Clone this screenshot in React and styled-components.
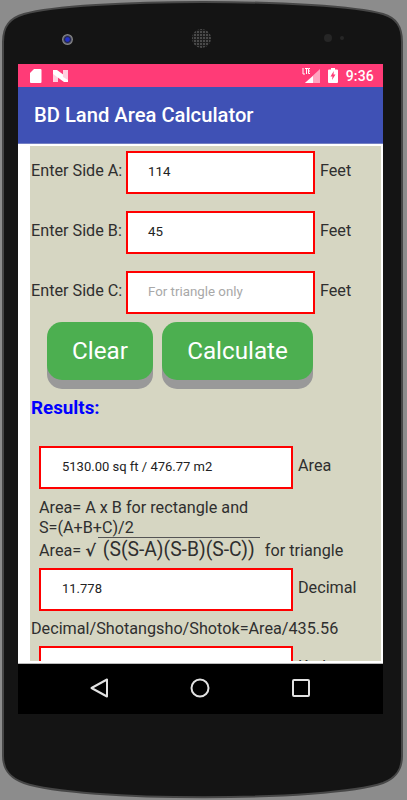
import styled, { createGlobalStyle } from "styled-components";

const Global = createGlobalStyle`
  html, body {
    margin: 0;
    padding: 0;
    background: #8c8c8c;
    overflow: hidden;
  }
  * { box-sizing: border-box; }
`;

const Page = styled.div`
  position: relative;
  width: 407px;
  height: 800px;
  background: #8c8c8c;
`;

const DeviceShape = styled.svg`
  position: absolute;
  left: 0;
  top: 0;
`;

const Phone = styled.div`
  position: relative;
  height: 800px;
  padding: 0 24px 0 18px;
  display: flex;
  flex-direction: column;
`;

const TopBezel = styled.div`
  height: 64px;
  flex-shrink: 0;
`;

const Lens = styled.span`
  position: absolute;
  left: 62px;
  top: 34px;
  width: 11px;
  height: 11px;
  border-radius: 50%;
  background: radial-gradient(circle, #2230c8 0 22%, #20244a 38%, #8a8a8a 62%, #3a3a3a 85%, #1c1c1c 100%);
`;

const Speaker = styled.span`
  position: absolute;
  left: 192px;
  top: 29px;
  width: 19px;
  height: 19px;
  border-radius: 50%;
  background-color: #4a4a4a;
  background-image: radial-gradient(circle, #1d1d1d 0 1px, transparent 1.2px);
  background-size: 3px 3px;
`;

const Sensor = styled.span`
  position: absolute;
  top: ${(p) => 38 - p.$size / 2}px;
  left: ${(p) => p.$left}px;
  width: ${(p) => p.$size}px;
  height: ${(p) => p.$size}px;
  border-radius: 50%;
  background: #262626;
`;

const Screen = styled.div`
  width: 365px;
  height: 650px;
  flex-shrink: 0;
  display: flex;
  flex-direction: column;
  background: #fff;
  font-family: Roboto, "Liberation Sans", sans-serif;
`;

const StatusBar = styled.div`
  height: 23px;
  flex-shrink: 0;
  display: flex;
  align-items: center;
  padding: 0 9px 0 12px;
  background: #ff3b77;
  color: #fff;
`;

const StatusLeft = styled.div`
  display: flex;
  align-items: center;
  gap: 11px;
  flex: 1;
`;

const StatusRight = styled.div`
  display: flex;
  align-items: center;
  gap: 8px;
`;

const Clock = styled.span`
  font-size: 14px;
  font-weight: 500;
  letter-spacing: 0.2px;
`;

const AppBar = styled.div`
  height: 57px;
  flex-shrink: 0;
  display: flex;
  align-items: center;
  padding: 0 16px;
  background: #3f51b5;
  color: #fff;
  font-size: 20.2px;
  font-weight: 500;
  border-bottom: 1px solid #7480c4;
`;

const Body = styled.div`
  flex: 1;
  min-height: 0;
  overflow: hidden;
  padding: 2px 2px 2px 12px;
`;

const Panel = styled.div`
  height: 100%;
  overflow: hidden;
  background: #d6d6c2;
  padding: 5px 0 0 1px;
  color: #2f2f2f;
  font-size: 16.2px;
`;

const SideRow = styled.div`
  height: 43px;
  margin-bottom: 17px;
  display: flex;
  align-items: flex-start;
`;

const SideLabel = styled.span`
  width: 95px;
  margin-top: 10px;
  white-space: nowrap;
`;

const Box = styled.div`
  width: ${(p) => p.$width}px;
  height: 43px;
  flex-shrink: 0;
  display: flex;
  align-items: center;
  padding: 0 0 2px ${(p) => p.$pad}px;
  background: #fff;
  border: 2px solid #ff0000;
  color: ${(p) => (p.$hint ? "#a8a8a8" : "#222")};
  font-size: ${(p) => (p.$small ? 13 : 13.3)}px;
`;

const Unit = styled.span`
  margin: ${(p) => p.$drop || 10}px 0 0 5px;
`;

const Buttons = styled.div`
  display: flex;
  gap: 9px;
  margin: -9px 0 0 16px;
`;

const Button = styled.div`
  width: ${(p) => p.$width}px;
  height: 58px;
  display: flex;
  align-items: center;
  justify-content: center;
  border-radius: 15px;
  background: #4caf50;
  box-shadow: 0 9px 0 #999;
  color: #fff;
  font-size: 24.2px;
`;

const ResultsTitle = styled.div`
  margin-top: 18px;
  color: #0000ff;
  font-size: 18.8px;
  font-weight: 700;
  line-height: 21px;
`;

const ResultRow = styled.div`
  display: flex;
  margin: ${(p) => p.$top || 0}px 0 0 8px;
`;

const Note = styled.div`
  margin: 9px 0 0 8px;
  line-height: 20px;
`;

const Root = styled.span`
  display: inline-block;
  border-top: 1px solid #555;
  margin: 0 1px 0 2px;
  padding: 0 5px;
  font-size: 19.3px;
  line-height: 23px;
`;

const RootSign = styled.span`
  font-family: "DejaVu Sans", sans-serif;
  font-size: 16px;
  font-weight: 700;
`;

const Formula = styled.div`
  height: 24px;
  margin-top: -1px;
  white-space: nowrap;
`;

const Line = styled.div`
  margin: 8px 0;
  line-height: 19px;
  white-space: nowrap;
`;

const NavBar = styled.div`
  height: 51px;
  flex-shrink: 0;
  display: grid;
  grid-template-columns: 71px 20px 81px 20px 82px 18px;
  align-items: center;
  background: #000;
  padding-bottom: 2px;
  border-top: 1px solid #bbb;

  svg:nth-child(1) { grid-column: 2; }
  svg:nth-child(2) { grid-column: 4; }
  svg:nth-child(3) { grid-column: 6; }
`;

export default function App() {
  return (
    <>
      <Global />
      <Page>
        <DeviceShape width="407" height="800" viewBox="0 0 407 800">
          <path
            d="M3 42C3 26 10 18 24 14C80 -2 327 -2 383 14C396 18 402 26 402 42V756C402 770 396 778 383 783C327 802 80 802 24 783C10 778 3 770 3 756Z"
            fill="#141414"
            stroke="#474747"
            strokeWidth="2"
          />
        </DeviceShape>
        <Phone>
          <TopBezel>
            <Lens />
            <Speaker />
            <Sensor $left={324} $size={8} />
            <Sensor $left={340} $size={4} />
          </TopBezel>
          <Screen>
            <StatusBar>
              <StatusLeft>
                <svg width="12" height="14" viewBox="0 0 12 14">
                  <path d="M4 0h6.500a1 1 0 0 1 1 1v12a1 1 0 0 1-1 1h-9.500a1 1 0 0 1-1-1V4z" fill="#fff" />
                </svg>
                <svg width="15" height="12" viewBox="0 0 15 12">
                  <path d="M0 1l5 3v8H0z" fill="#ffd0df" />
                  <path d="M0 0h4l11 8v4h-4L0 4z" fill="#fff" />
                  <path d="M10 0h5v10l-5-3z" fill="#ffd0df" />
                </svg>
              </StatusLeft>
              <StatusRight>
                <svg width="18" height="16" viewBox="0 0 18 16">
                  <path d="M18 1v14H3z" fill="#ffa5c0" />
                  <path d="M11 8v7H3z" fill="#fff" />
                  <path d="M1 0v6h2M4.500 0v6M3 .5h3M8 .5H6.500v5H8M6.500 3H8" fill="none" stroke="#fff" strokeWidth="1" />
                </svg>
                <svg width="10" height="15" viewBox="0 0 10 15">
                  <path d="M3 0h4v1.500h2a1 1 0 0 1 1 1V14a1 1 0 0 1-1 1H1a1 1 0 0 1-1-1V2.500a1 1 0 0 1 1-1h2z" fill="#fff" />
                  <path d="M5.800 3L2.500 8.500h2L4 12l3.500-5.500h-2z" fill="#ff3b77" />
                </svg>
                <Clock>9:36</Clock>
              </StatusRight>
            </StatusBar>
            <AppBar>BD Land Area Calculator</AppBar>
            <Body>
              <Panel>
                <SideRow>
                  <SideLabel>Enter Side A:</SideLabel>
                  <Box $width={189} $pad={20}>114</Box>
                  <Unit>Feet</Unit>
                </SideRow>
                <SideRow>
                  <SideLabel>Enter Side B:</SideLabel>
                  <Box $width={189} $pad={20}>45</Box>
                  <Unit>Feet</Unit>
                </SideRow>
                <SideRow>
                  <SideLabel>Enter Side C:</SideLabel>
                  <Box $width={189} $pad={20} $hint>For triangle only</Box>
                  <Unit>Feet</Unit>
                </SideRow>
                <Buttons>
                  <Button $width={106}>Clear</Button>
                  <Button $width={151}>Calculate</Button>
                </Buttons>
                <ResultsTitle>Results:</ResultsTitle>
                <ResultRow $top={27}>
                  <Box $width={254} $pad={21} $small>5130.00 sq ft / 476.77 m2</Box>
                  <Unit>Area</Unit>
                </ResultRow>
                <Note>
                  Area= A x B for rectangle and
                  <br />
                  S=(A+B+C)/2
                  <Formula>
                    Area= <RootSign>√</RootSign><Root>(S(S-A)(S-B)(S-C))</Root> for triangle
                  </Formula>
                </Note>
                <ResultRow $top={7}>
                  <Box $width={254} $pad={21} $small>11.778</Box>
                  <Unit>Decimal</Unit>
                </ResultRow>
                <Line>Decimal/Shotangsho/Shotok=Area/435.56</Line>
                <ResultRow>
                  <Box $width={254} $pad={21} />
                  <Unit $drop={11}>Katha</Unit>
                </ResultRow>
              </Panel>
            </Body>
            <NavBar>
              <svg width="20" height="20" viewBox="0 0 20 20">
                <path d="M18 1.500v17L2.500 10z" fill="none" stroke="#e2e2e2" strokeWidth="2" strokeLinejoin="round" />
              </svg>
              <svg width="20" height="20" viewBox="0 0 20 20">
                <circle cx="10" cy="10" r="8.500" fill="none" stroke="#e2e2e2" strokeWidth="2" />
              </svg>
              <svg width="18" height="18" viewBox="0 0 18 18">
                <rect x="1" y="1" width="16" height="16" rx="1" fill="none" stroke="#e2e2e2" strokeWidth="2" />
              </svg>
            </NavBar>
          </Screen>
        </Phone>
      </Page>
    </>
  );
}
